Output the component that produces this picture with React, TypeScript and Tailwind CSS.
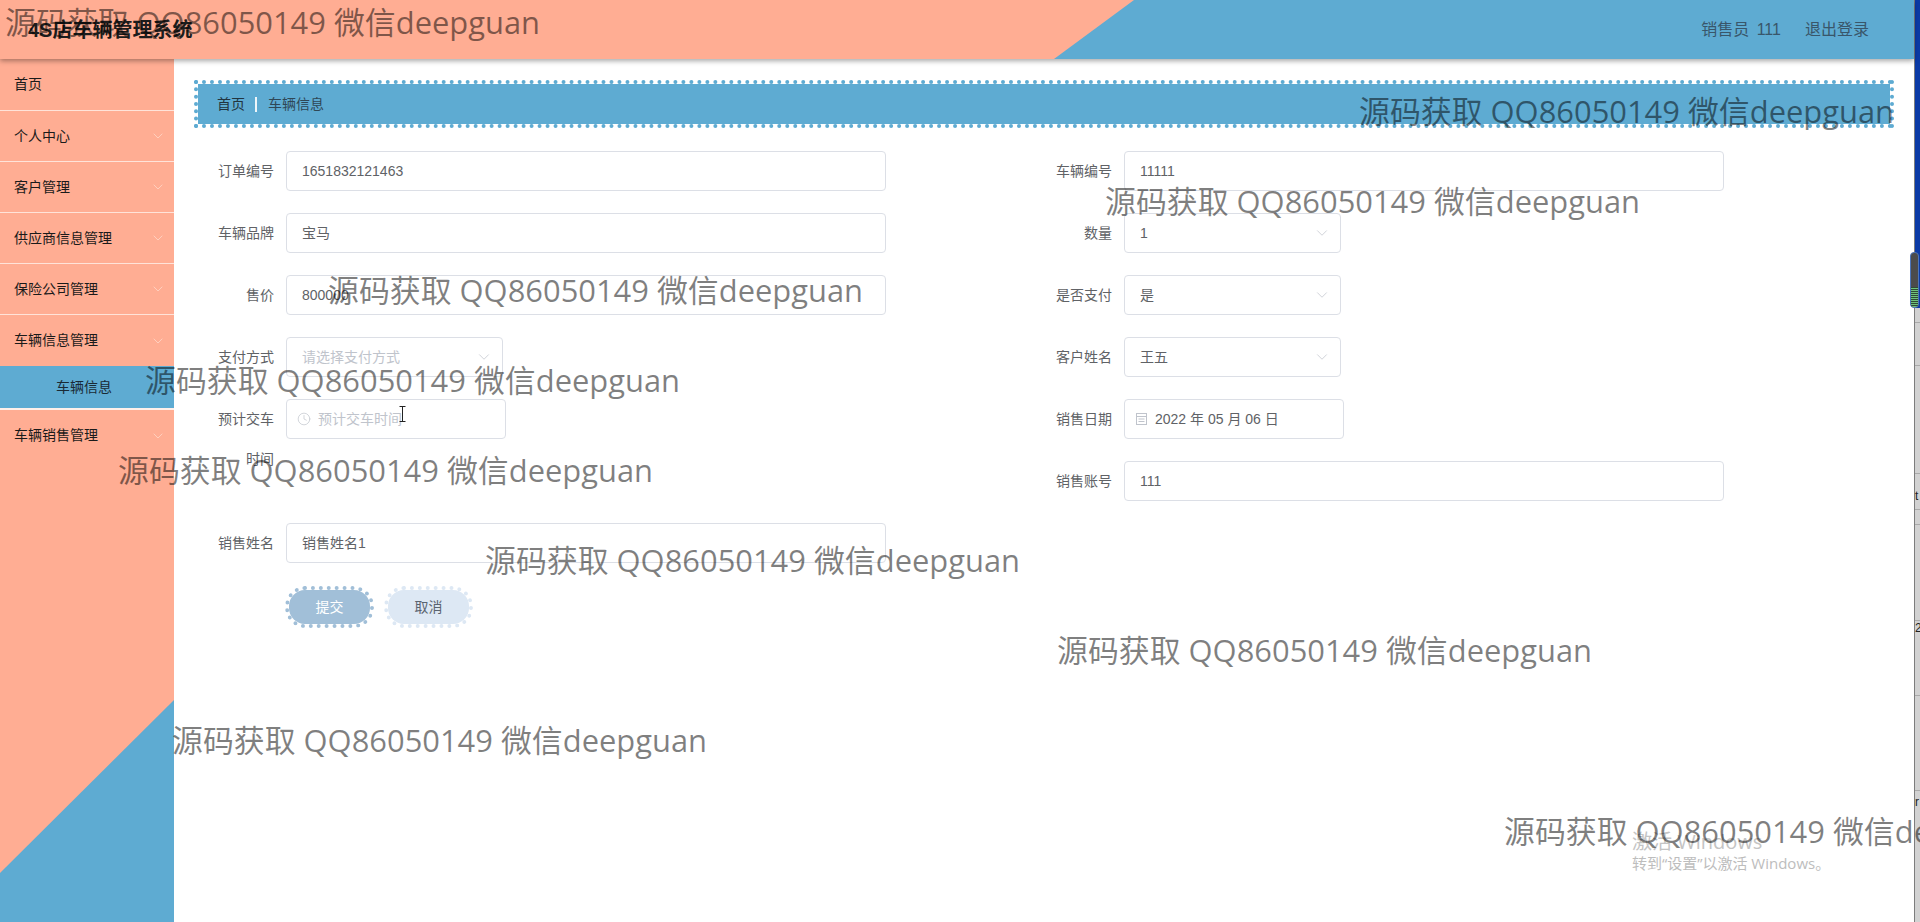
import { ChevronDown, Clock } from "lucide-react";
import type { ReactNode } from "react";

const FONT = "font-['Liberation_Sans','Noto_Sans_CJK_SC',sans-serif]";

const menus = [
  { t: "个人中心" },
  { t: "客户管理" },
  { t: "供应商信息管理" },
  { t: "保险公司管理" },
];

const watermarks = [
  "left-[5px] top-[2px]",
  "left-[1359px] top-[91px]",
  "left-[1105px] top-[181px]",
  "left-[328px] top-[270px]",
  "left-[145px] top-[360px]",
  "left-[118px] top-[450px]",
  "left-[485px] top-[540px]",
  "left-[1057px] top-[630px]",
  "left-[172px] top-[720px]",
  "left-[1504px] top-[811px]",
];

const stripLines = ["top-[322px]", "top-[365px]", "top-[473px]", "top-[509px]", "top-[524px]", "top-[620px]", "top-[695px]", "top-[790px]"];

function MenuRow({ t, border = true }: { t: string; border?: boolean }) {
  return (
    <div className={`flex h-[51px] items-center justify-between pl-[14px] pr-2 text-[14px] text-[#1a1a1a] ${border ? "border-b border-[#ffe3d9]" : ""}`}>
      <span>{t}</span>
      <ChevronDown size={16} strokeWidth={1.4} className="text-[#ffd2c2]" />
    </div>
  );
}

function Item({ label, children, tall }: { label: string; children: ReactNode; tall?: boolean }) {
  return (
    <div className={`flex items-start ${tall ? "h-[102px]" : "h-10"}`}>
      <div className="mr-3 w-20 shrink-0 pl-5 text-right text-[14px] leading-10 text-[#606266]">{label}</div>
      {children}
    </div>
  );
}

function Box({ children, w, muted }: { children: ReactNode; w: string; muted?: boolean }) {
  return (
    <div className={`flex h-10 items-center rounded border border-[#dcdfe6] bg-white px-[15px] text-[14px] ${w} ${muted ? "text-[#c0c4cc]" : "text-[#606266]"}`}>
      {children}
    </div>
  );
}

function SelectBox({ children, muted }: { children: ReactNode; muted?: boolean }) {
  return (
    <Box w="w-[217px] justify-between" muted={muted}>
      <span>{children}</span>
      <ChevronDown size={18} strokeWidth={1} className="-mr-[6px] text-[#c0c4cc]" />
    </Box>
  );
}

export default function App() {
  return (
    <div className={`relative flex h-[922px] w-[1920px] overflow-hidden bg-white ${FONT}`}>
      <div className="flex h-full w-[1914px] flex-col">
        <header className="relative z-10 flex h-[59px] shrink-0 items-center justify-between bg-[#ffad93] pl-[28px] pr-[45px] shadow-[0_2px_5px_rgba(0,0,0,0.35)]">
          <div className="absolute inset-0 bg-[#5eabd2] [clip-path:polygon(1134px_0,100%_0,100%_100%,1054px_100%)]" />
          <div className="relative text-[20px] font-bold text-[#1c1c1c]">4S店车辆管理系统</div>
          <div className="relative flex items-center gap-6 text-[16px] text-[#39566a]">
            <span className="[word-spacing:3px]">销售员 111</span>
            <span>退出登录</span>
          </div>
        </header>
        <div className="flex min-h-0 flex-1">
          <aside className="relative w-[174px] shrink-0 bg-[#ffad93]">
            <div className="absolute inset-0 bg-[#5eabd2] [clip-path:polygon(100%_641px,100%_100%,0_100%,0_814px)]" />
            <div className="relative">
              <div className="flex h-[52px] items-center border-b border-[#ffe3d9] pl-[14px] text-[14px] text-[#1a1a1a]">首页</div>
              {menus.map((m) => (
                <MenuRow key={m.t} t={m.t} />
              ))}
              <MenuRow t="车辆信息管理" border={false} />
              <div className="flex h-11 items-center border-b-2 border-[#fff0ea] bg-[#5eabd2] pl-14 text-[14px] text-[#1a2a35]">车辆信息</div>
              <MenuRow t="车辆销售管理" border={false} />
            </div>
          </aside>
          <main className="min-w-0 flex-1 pl-5 pt-[21px]">
            <div className="flex h-12 w-[1700px] items-center rounded-[1px] border-4 border-dotted border-[#5eabd2] bg-[#5eabd2] bg-clip-padding pl-[19px] text-[14px]">
              <span className="text-[#22343f]">首页</span>
              <span className="ml-[10px] mr-[11px] h-[15px] w-0.5 bg-[#eef6fa]" />
              <span className="text-[#2f4756]">车辆信息</span>
            </div>
            <div className="mt-[23px] grid w-[1700px] grid-cols-[838px_1fr]">
              <div className="flex flex-col gap-[22px]">
                <Item label="订单编号"><Box w="w-[600px]">1651832121463</Box></Item>
                <Item label="车辆品牌"><Box w="w-[600px]">宝马</Box></Item>
                <Item label="售价"><Box w="w-[600px]">800000</Box></Item>
                <Item label="支付方式"><SelectBox muted>请选择支付方式</SelectBox></Item>
                <Item label="预计交车时间" tall>
                  <Box w="w-[220px] gap-[7px] !pl-[10px]" muted>
                    <Clock size={14} strokeWidth={1.2} />
                    <span>预计交车时间</span>
                  </Box>
                </Item>
                <Item label="销售姓名"><Box w="w-[600px]">销售姓名1</Box></Item>
                <div className="ml-[91px] mt-px flex gap-[10px]">
                  <button className="h-[42px] w-[89px] rounded-[20px] border-4 border-dotted border-[#a1bfd8] bg-[#a1bfd8] bg-clip-padding text-[14px] text-white">提交</button>
                  <button className="h-[42px] w-[89px] rounded-[20px] border-4 border-dotted border-[#dde8f4] bg-[#dde8f4] bg-clip-padding text-[14px] text-[#5b6470]">取消</button>
                </div>
              </div>
              <div className="flex flex-col gap-[22px]">
                <Item label="车辆编号"><Box w="w-[600px]">11111</Box></Item>
                <Item label="数量"><SelectBox>1</SelectBox></Item>
                <Item label="是否支付"><SelectBox>是</SelectBox></Item>
                <Item label="客户姓名"><SelectBox>王五</SelectBox></Item>
                <Item label="销售日期">
                  <Box w="w-[220px] gap-[7px] !pl-[10px]">
                    <svg width="13" height="14" viewBox="0 0 13 14" fill="none" stroke="#c0c4cc" strokeWidth="1">
                      <rect x="1.5" y="1.5" width="10" height="11" />
                      <path d="M1.5 4.5h10M3.5 7h6M3.5 9.5h6" />
                    </svg>
                    <span>2022 年 05 月 06 日</span>
                  </Box>
                </Item>
                <Item label="销售账号"><Box w="w-[600px]">111</Box></Item>
              </div>
            </div>
          </main>
        </div>
      </div>

      <div className="relative h-full w-[6px] shrink-0 border-l border-[#7d7d7d] bg-[#d2d2d2] text-[12px] leading-none text-[#222]">
        <div className="h-[308px] bg-[#0b3aa6]" />
        {stripLines.map((l) => (
          <div key={l} className={`absolute left-0 h-px w-full bg-[#aaaaaa] ${l}`} />
        ))}
        <div className="absolute left-0 top-[490px]">t</div>
        <div className="absolute left-0 top-[622px]">2</div>
        <div className="absolute left-0 top-[796px]">r</div>
      </div>

      <div className="absolute left-[1910px] top-[252px] h-[56px] w-[9px] overflow-hidden rounded-[4px] border border-[#4d74b8] bg-[#4b4b4b]">
        <div className="absolute inset-x-0 bottom-0 h-[20px] bg-[repeating-linear-gradient(0deg,#6fc27a_0_1px,#2f4a33_1px_2px)]" />
      </div>

      <svg className="absolute left-[398px] top-[405px]" width="9" height="18" viewBox="0 0 9 18" fill="none" stroke="#222" strokeWidth="1">
        <path d="M1.5 1.5h6M4.5 1.5v15M1.5 16.5h6" />
      </svg>

      <div className="absolute left-[1632px] top-[828px] font-['Open_Sans','Noto_Sans_CJK_SC',sans-serif] text-[20px] leading-7 text-[#c4c4c4]">激活 Windows</div>
      <div className="absolute left-[1632px] top-[853px] font-['Open_Sans','Noto_Sans_CJK_SC',sans-serif] text-[15px] leading-5 text-[#bdbdbd]">转到“设置”以激活 Windows。</div>

      {watermarks.map((w) => (
        <div key={w} className={`absolute z-20 whitespace-nowrap font-['Open_Sans','Noto_Sans_CJK_SC',sans-serif] text-[30.9px] leading-10 text-[rgba(0,0,0,0.5)] ${w}`}>
          源码获取 QQ86050149 微信deepguan
        </div>
      ))}
    </div>
  );
}
